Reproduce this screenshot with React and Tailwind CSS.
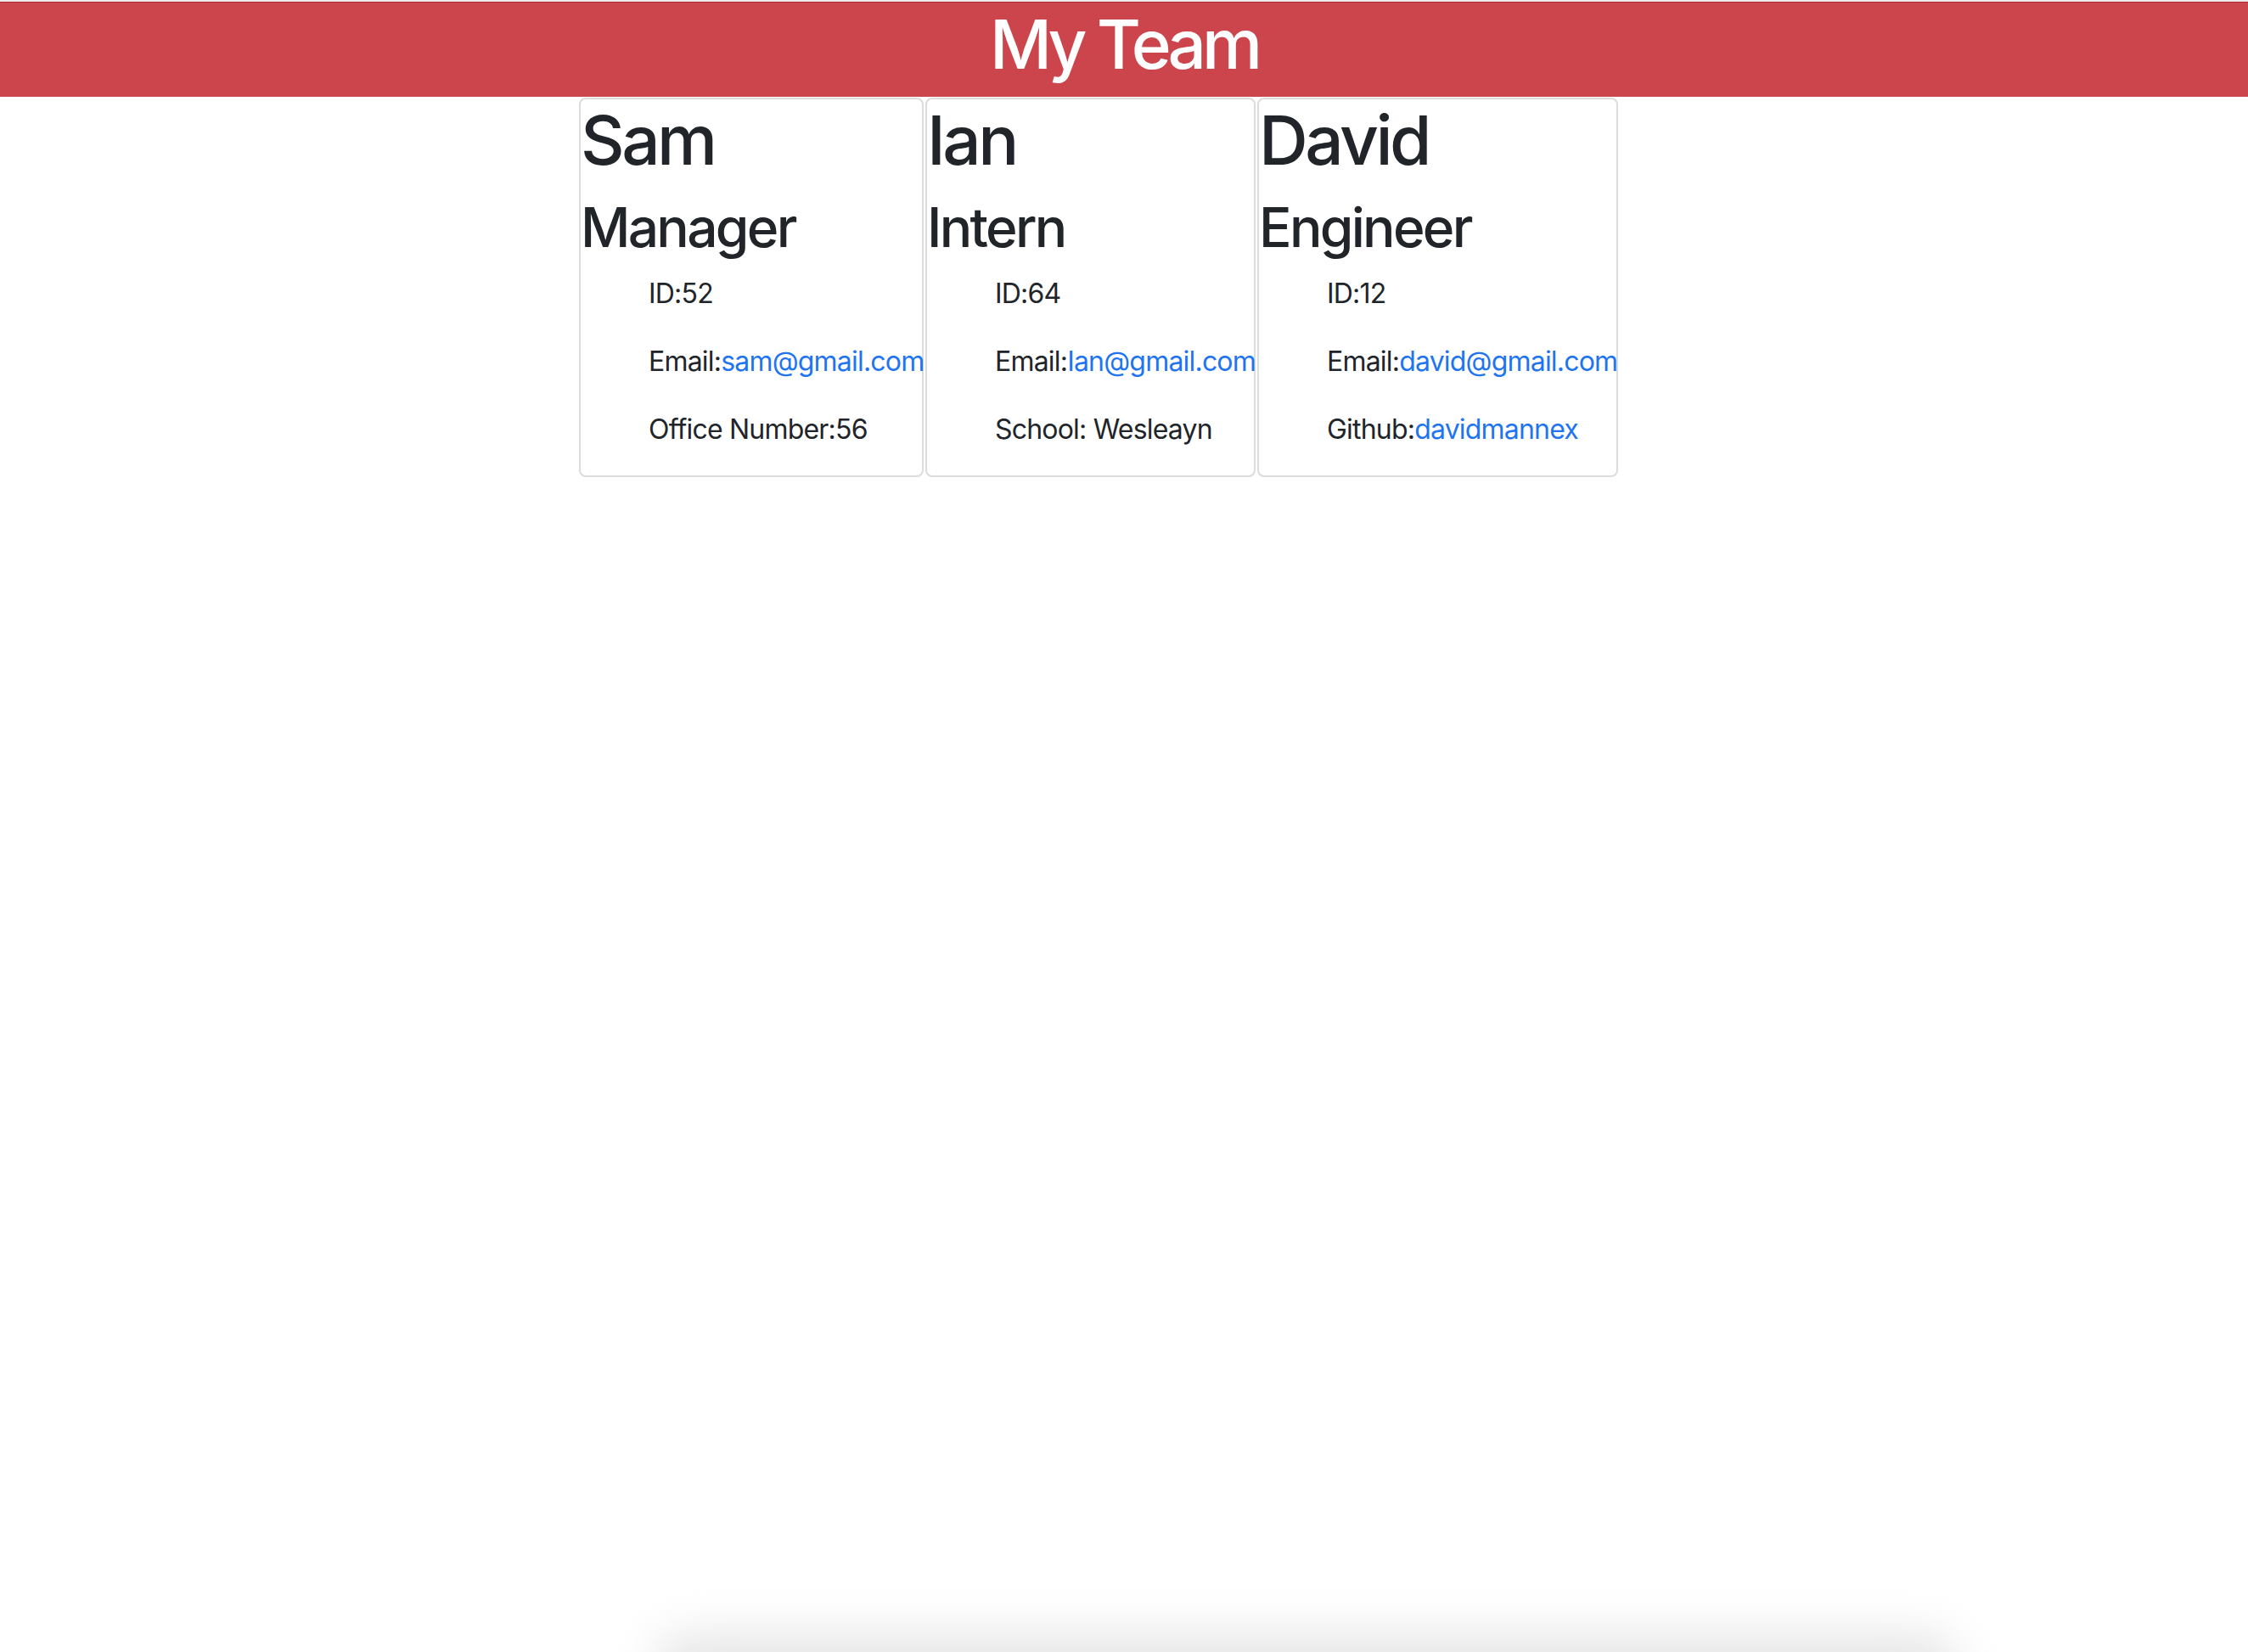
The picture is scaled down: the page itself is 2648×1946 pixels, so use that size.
import React from 'react';

const team = [
  {
    name: 'Sam',
    role: 'Manager',
    id: 52,
    email: 'sam@gmail.com',
    width: 'w-[406px]',
    extra: <>Office Number:56</>,
  },
  {
    name: 'Ian',
    role: 'Intern',
    id: 64,
    email: 'Ian@gmail.com',
    width: 'w-[389px]',
    extra: <>School: Wesleayn</>,
  },
  {
    name: 'David',
    role: 'Engineer',
    id: 12,
    email: 'david@gmail.com',
    width: 'w-[425px]',
    extra: (
      <>
        Github:<a href="#" className="text-[#1f74f0]">davidmannex</a>
      </>
    ),
  },
];

const Card = ({ member }) => (
  <div className={`${member.width} shrink-0 border-2 border-[#dcdcdc] rounded-[8px] bg-white`}>
    <h1 className="text-[80px] leading-[96px] font-medium tracking-[-3.5px] text-[#212529] mb-[16px]">
      {member.name}
    </h1>
    <h2 className="text-[64px] leading-[77px] font-medium tracking-[-2.7px] text-[#212529] mb-[16px]">
      {member.role}
    </h2>
    <ul className="pl-[80px] list-none text-[32px] leading-[48px] text-[#212529] tracking-[-0.8px] whitespace-nowrap">
      <li>
        <p className="mb-[32px]">ID:{member.id}</p>
      </li>
      <li>
        <p className="mb-[32px]">
          Email:<a href="#" className="text-[#1f74f0]">{member.email}</a>
        </p>
      </li>
      <li>
        <p className="mb-[30px]">{member.extra}</p>
      </li>
    </ul>
  </div>
);

export default function App() {
  return (
    <div className="relative h-[1946px] overflow-hidden bg-white font-['Inter','Liberation_Sans',Arial,sans-serif]">
      <div className="h-[2px] bg-[#ececec]" />
      <header className="h-[112px] border-t border-[#b0272e] bg-[#cd454c] text-center">
        <h1 className="pt-[1px] text-[80px] leading-[96px] font-medium text-white tracking-[-5px]">My Team</h1>
      </header>

      <div className="flex items-start gap-[2px] ml-[682px] mt-px">
        {team.map((m) => (
          <Card key={m.name} member={m} />
        ))}
      </div>

      {/* soft shadow along the bottom edge */}
      <div className="pointer-events-none absolute left-[770px] right-[340px] bottom-[-62px] h-[84px] rounded-full bg-[#e6e6e6] blur-[26px]" />
    </div>
  );
}
